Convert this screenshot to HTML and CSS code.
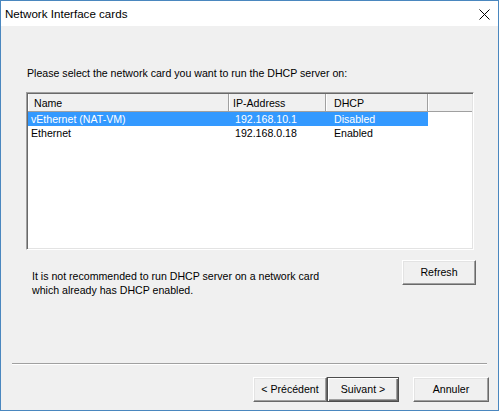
FILE: index.html
```html
<!DOCTYPE html>
<html>
<head>
<meta charset="utf-8">
<link rel="stylesheet" href="styles.css">
</head>
<body>
<div class="window">
  <div class="titlebar">
    <span class="title">Network Interface cards</span>
    <svg class="close" width="11" height="11" viewBox="0 0 11 11"><path d="M0.5 0.5 L10.5 10.5 M10.5 0.5 L0.5 10.5" stroke="#000" stroke-width="1" fill="none"/></svg>
  </div>
  <div class="client">
    <div class="prompt">Please select the network card you want to run the DHCP server on:</div>
    <div class="listview">
      <div class="lv-header">
        <div class="hcell c-name">Name</div>
        <div class="hcell c-ip">IP-Address</div>
        <div class="hcell c-dhcp">DHCP</div>
        <div class="hcell c-rest"></div>
      </div>
      <div class="lv-row selected">
        <div class="cell c-name">vEthernet (NAT-VM)</div>
        <div class="cell c-ip">192.168.10.1</div>
        <div class="cell c-dhcp">Disabled</div>
      </div>
      <div class="lv-row">
        <div class="cell c-name">Ethernet</div>
        <div class="cell c-ip">192.168.0.18</div>
        <div class="cell c-dhcp">Enabled</div>
      </div>
    </div>
    <div class="note-row">
      <div class="note">It is not recommended to run DHCP server on a network card<br>which already has DHCP enabled.</div>
      <button class="btn refresh">Refresh</button>
    </div>
    <div class="separator"></div>
    <div class="button-row">
      <button class="btn prev">&lt; Précédent</button>
      <button class="btn next default">Suivant &gt;</button>
      <button class="btn cancel">Annuler</button>
    </div>
  </div>
</div>
</body>
</html>
```

FILE: styles.css
```css
* { box-sizing: border-box; }
html, body { margin: 0; padding: 0; }
body {
  font-family: "Liberation Sans", Arial, sans-serif;
  font-size: 10.6px;
  color: #000;
  background: #f0f0f0;
}
.window {
  width: 499px;
  height: 411px;
  border: 1px solid #4a87bf;
  background: #f0f0f0;
  display: flex;
  flex-direction: column;
}
.titlebar {
  height: 25px;
  background: #fff;
  display: flex;
  align-items: center;
  justify-content: space-between;
  padding: 0 8px 0 4px;
  flex: none;
}
.title {
  font-size: 11.6px;
  line-height: 16px;
}
.close { display: block; margin-top: 1px; }
.client {
  flex: 1;
  display: flex;
  flex-direction: column;
}
.prompt {
  margin: 41px 0 0 26px;
  line-height: 13px;
}
.listview {
  margin: 12px 0 0 25px;
  width: 448px;
  height: 158px;
  background: #fff;
  border: 1px solid;
  border-color: #a0a0a0 #fff #fff #a0a0a0;
  box-shadow: inset 1px 1px #696969, inset -1px -1px #e3e3e3;
  padding: 1px;
}
.lv-header {
  display: flex;
  height: 18px;
  background: #f0f0f0;
  border-bottom: 1px solid #a0a0a0;
}
.hcell {
  line-height: 16px;
  padding-top: 1px;
  border-right: 1px solid #a0a0a0;
  box-shadow: inset 1px 0 #fff;
  white-space: nowrap;
}
.c-name { width: 201px; padding-left: 6px; }
.c-ip { width: 97px; padding-left: 4px; }
.c-dhcp { width: 102px; padding-left: 8px; }
.c-rest { flex: 1; border-right: none; }
.lv-row {
  display: flex;
  width: 400px;
  height: 14px;
  line-height: 14px;
}
.cell { white-space: nowrap; }
.lv-row .c-name { padding-left: 3px; }
.lv-row .c-ip { padding-left: 6px; }
.selected {
  background: #3399ff;
  color: #fff;
}
.note-row {
  display: flex;
  justify-content: space-between;
  align-items: flex-start;
  margin: 10px 22px 0 31px;
}
.note {
  padding-top: 9px;
  line-height: 14px;
}
.btn {
  font-family: "Liberation Sans", Arial, sans-serif;
  font-size: 10.6px;
  color: #000;
  height: 25px;
  padding: 0;
  margin: 0;
  background: #f0f0f0;
  border: 1px solid;
  border-color: #fff #696969 #696969 #fff;
  box-shadow: inset -1px -1px #a0a0a0, inset 1px 1px #e3e3e3;
  line-height: 13px;
}
.refresh { width: 74px; }
.separator {
  margin: auto 11px 0 11px;
  height: 2px;
  border-top: 1px solid #a0a0a0;
  border-bottom: 1px solid #fff;
}
.button-row {
  display: flex;
  justify-content: flex-end;
  margin: 12px 9px 8px 0;
}
.prev { width: 74px; }
.next { width: 72px; }
.cancel { width: 76px; margin-left: 14px; }
.btn.default {
  border: 1px solid #4d4d4d;
  box-shadow: inset 1px 1px #fff, inset -1px -1px #696969, inset -2px -2px #a0a0a0;
}
```
